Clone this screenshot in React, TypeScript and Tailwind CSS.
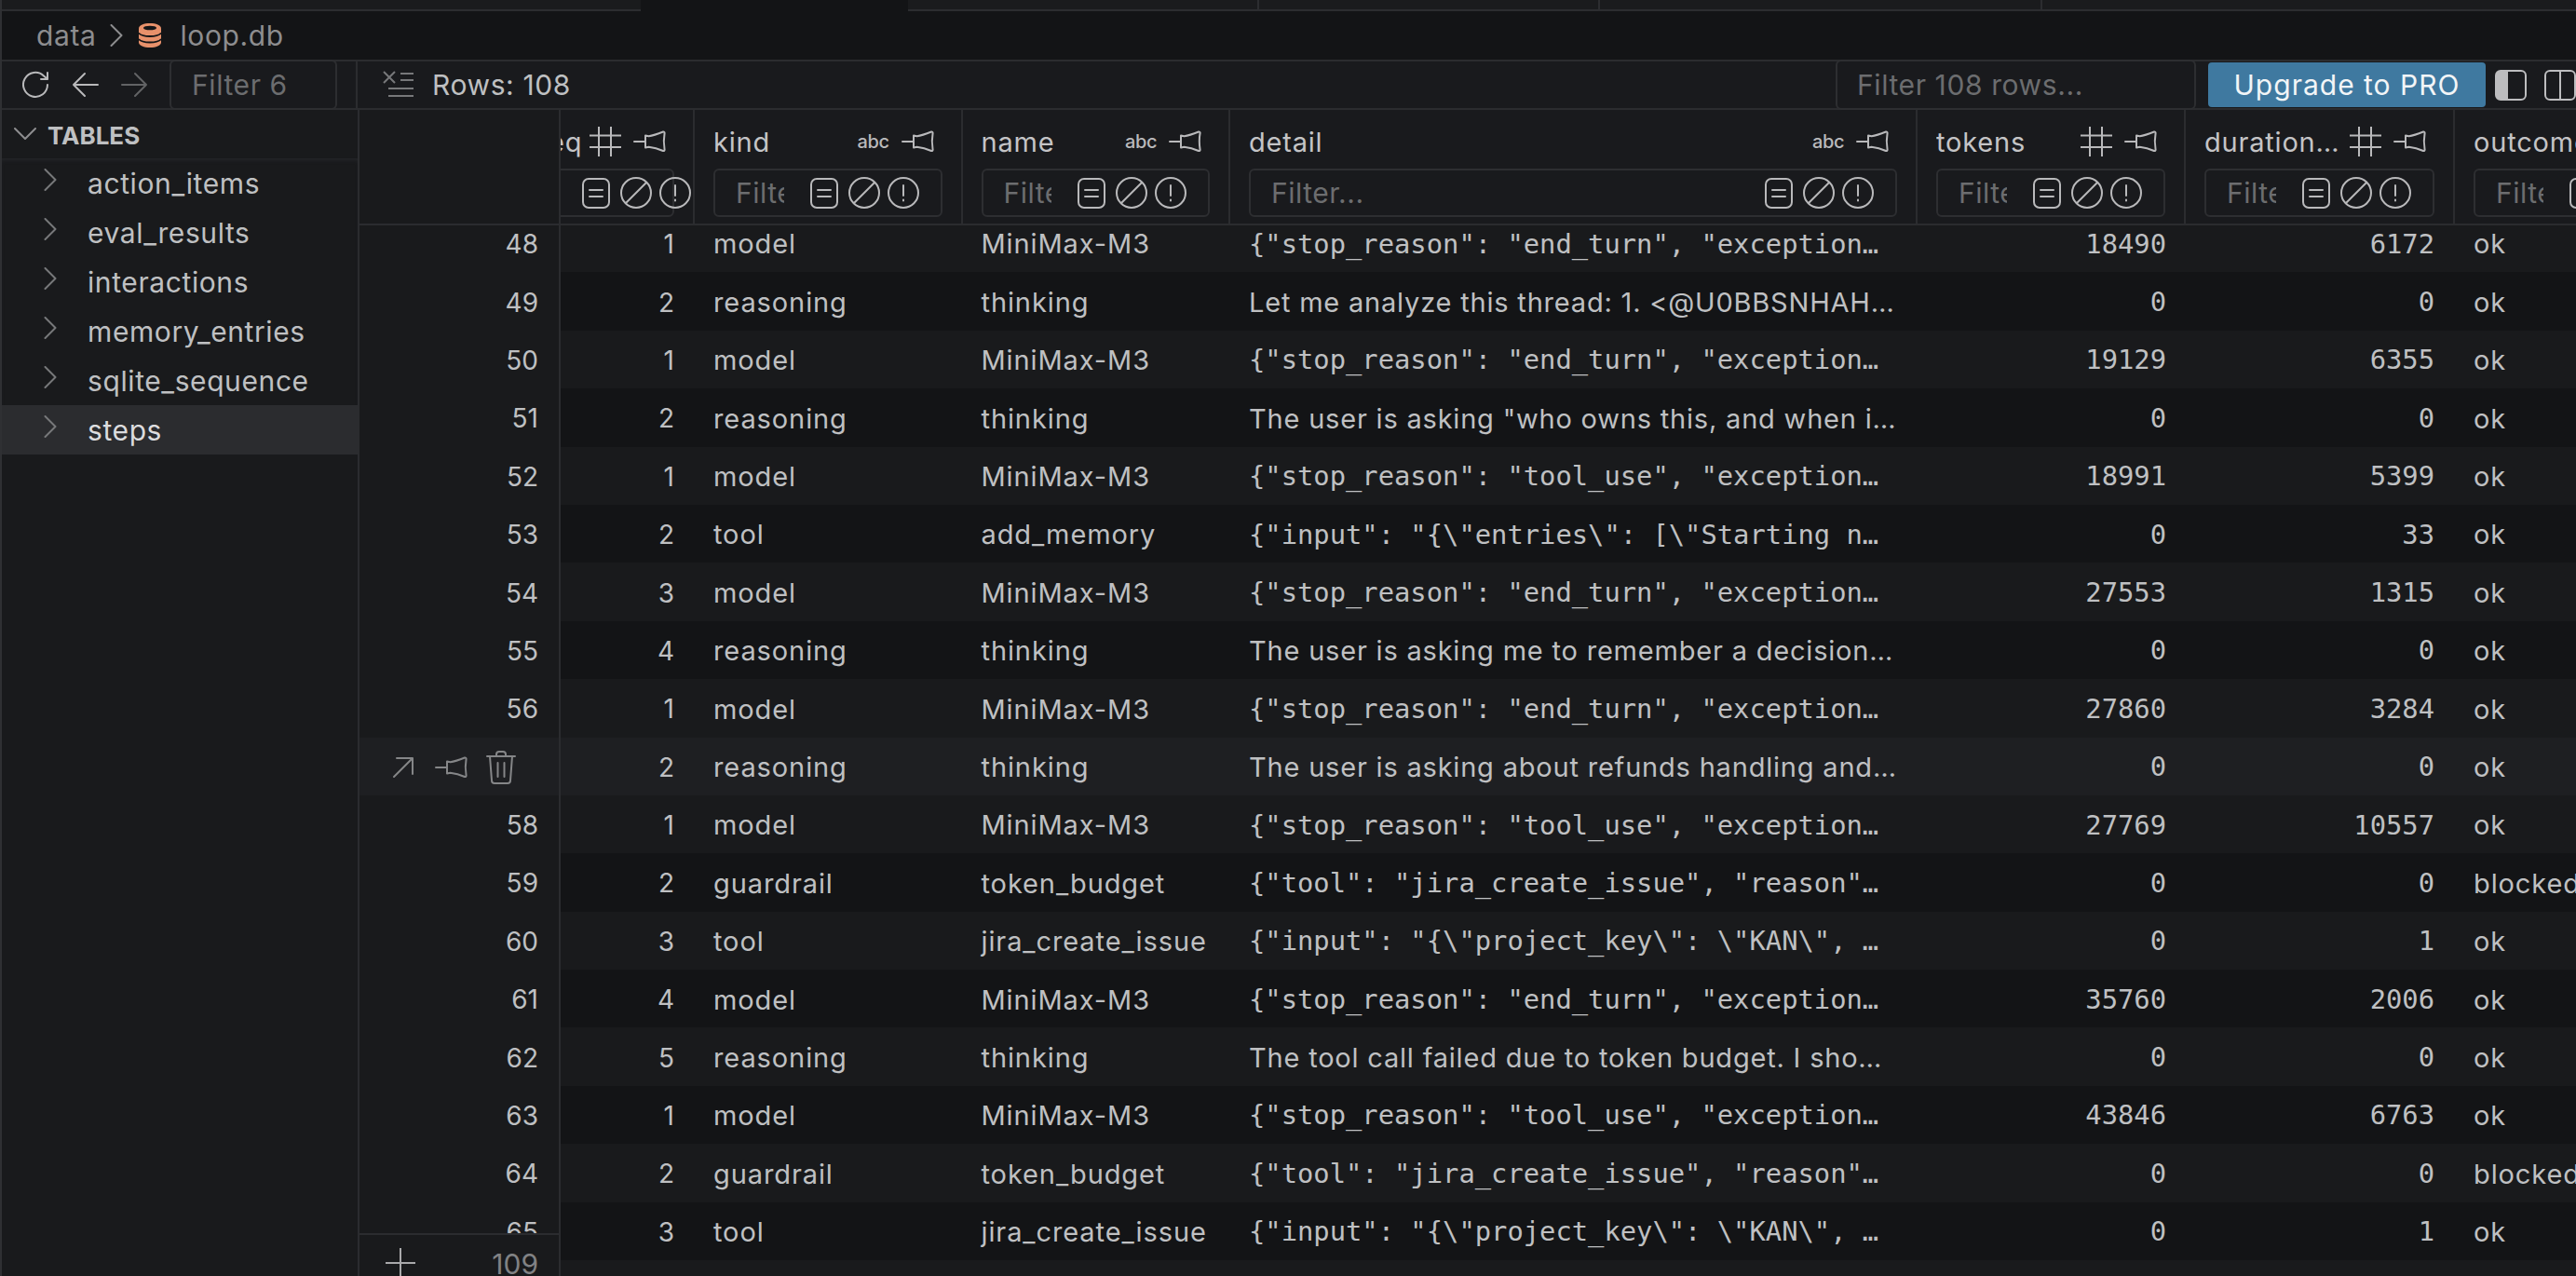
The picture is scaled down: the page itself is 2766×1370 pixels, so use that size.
import React from 'react';

const stroke = { fill: 'none', stroke: 'currentColor', strokeWidth: 2, strokeLinecap: 'round', strokeLinejoin: 'round' } as const;

const PinIcon = () => (
  <svg width="36" height="24" viewBox="0 0 36 24" {...stroke} className="shrink-0">
    <path d="M1 12h12" />
    <path d="M13 5.500v13l3.500-.8c5 .5 10.500 2 15.500 4.300a1.200 1.200 0 0 0 1.600-1.200c-1-6-1-12.600 0-18A1.200 1.200 0 0 0 32 1.500C27 3.500 21.500 5.500 16.500 6.300z" />
  </svg>
);

const HashIcon = () => (
  <svg width="34" height="34" viewBox="0 0 34 34" {...stroke} strokeLinecap="butt" className="shrink-0">
    <path d="M10 1v32M23 1v32M0 10.500h34M0 23h34" />
  </svg>
);

const AbcIcon = () => <span className="w-[32px] shrink-0 text-[20px] leading-none font-medium tracking-[-0.3px]">abc</span>;

const TextBoxIcon = () => (
  <svg width="30" height="33" viewBox="0 0 30 33" {...stroke} className="shrink-0">
    <rect x="1" y="1" width="28" height="31" rx="6" />
    <path d="M8 13h14M8 20h14" />
  </svg>
);

const BanIcon = () => (
  <svg width="34" height="34" viewBox="0 0 34 34" {...stroke} className="shrink-0">
    <circle cx="17" cy="17" r="16" />
    <path d="M6 28 28 6" />
  </svg>
);

const AlertIcon = () => (
  <svg width="34" height="34" viewBox="0 0 34 34" {...stroke} className="shrink-0">
    <circle cx="17" cy="17" r="16" />
    <path d="M17 9v11M17 24.500v1" />
  </svg>
);

const Chevron = ({ className }: { className: string }) => (
  <svg width="14" height="24" viewBox="0 0 14 24" {...stroke} className={className}>
    <path d="m1.500 1 11 11-11 11" />
  </svg>
);

const ArrowLeft = ({ className }: { className: string }) => (
  <svg width="30" height="30" viewBox="0 0 30 30" {...stroke} className={className}>
    <path d="M28 15H2M14 3 2 15l12 12" />
  </svg>
);

const DbIcon = () => (
  <svg width="24" height="26" viewBox="0 0 24 26" className="shrink-0">
    <path fill="#e8916b" d="M12 0C5.500 0 0 2 0 5.500v15C0 24 5.500 26 12 26s12-2 12-5.500v-15C24 2 18.500 0 12 0z" />
    <ellipse cx="12" cy="5" rx="7" ry="2.300" fill="#141517" />
    <path d="M0 10.500c2 2.500 7 3.500 12 3.500s10-1 12-3.500M0 17c2 2.500 7 3.500 12 3.500s10-1 12-3.500" fill="none" stroke="#141517" strokeWidth="1.800" />
  </svg>
);

const columns = [
  { name: 'seq', type: 'num', width: 'w-[193px]' },
  { name: 'kind', type: 'abc', width: 'w-[287.5px]' },
  { name: 'name', type: 'abc', width: 'w-[287.5px]' },
  { name: 'detail', type: 'abc', width: 'w-[738px]' },
  { name: 'tokens', type: 'num', width: 'w-[288px]' },
  { name: 'duration_ms', type: 'num', width: 'w-[289px]' },
  { name: 'outcome', type: 'abc', width: 'w-[287px]' },
];

const endTurn = '{"stop_reason": "end_turn", "exception…';
const toolUse = '{"stop_reason": "tool_use", "exception…';
const budget = '{"tool": "jira_create_issue", "reason"…';
const jira = '{"input": "{\\"project_key\\": \\"KAN\\", …';

const rows = [
  [48, 1, 'model', 'MiniMax-M3', endTurn, 18490, 6172, 'ok'],
  [49, 2, 'reasoning', 'thinking', 'Let me analyze this thread: 1. <@U0BBSNHAH…', 0, 0, 'ok'],
  [50, 1, 'model', 'MiniMax-M3', endTurn, 19129, 6355, 'ok'],
  [51, 2, 'reasoning', 'thinking', 'The user is asking "who owns this, and when i…', 0, 0, 'ok'],
  [52, 1, 'model', 'MiniMax-M3', toolUse, 18991, 5399, 'ok'],
  [53, 2, 'tool', 'add_memory', '{"input": "{\\"entries\\": [\\"Starting n…', 0, 33, 'ok'],
  [54, 3, 'model', 'MiniMax-M3', endTurn, 27553, 1315, 'ok'],
  [55, 4, 'reasoning', 'thinking', 'The user is asking me to remember a decision…', 0, 0, 'ok'],
  [56, 1, 'model', 'MiniMax-M3', endTurn, 27860, 3284, 'ok'],
  [57, 2, 'reasoning', 'thinking', 'The user is asking about refunds handling and…', 0, 0, 'ok'],
  [58, 1, 'model', 'MiniMax-M3', toolUse, 27769, 10557, 'ok'],
  [59, 2, 'guardrail', 'token_budget', budget, 0, 0, 'blocked'],
  [60, 3, 'tool', 'jira_create_issue', jira, 0, 1, 'ok'],
  [61, 4, 'model', 'MiniMax-M3', endTurn, 35760, 2006, 'ok'],
  [62, 5, 'reasoning', 'thinking', 'The tool call failed due to token budget. I sho…', 0, 0, 'ok'],
  [63, 1, 'model', 'MiniMax-M3', toolUse, 43846, 6763, 'ok'],
  [64, 2, 'guardrail', 'token_budget', budget, 0, 0, 'blocked'],
  [65, 3, 'tool', 'jira_create_issue', jira, 0, 1, 'ok'],
] as (string | number)[][];

const tables = ['action_items', 'eval_results', 'interactions', 'memory_entries', 'sqlite_sequence', 'steps'];

const mono = "font-['DejaVu_Sans_Mono',monospace] text-[28.8px] tracking-normal";
const label = 'text-[30px] tracking-[0.6px]';

const ColumnHeader = ({ name, type, width }: { name: string; type: string; width: string }) => (
  <div className={`${width} shrink-0 border-r-2 border-[#2b2c2f] pl-[20px] pr-[20px] pt-[10px]`}>
    <div className="flex h-[48px] items-center pr-[8px] text-[#b9b9bb]">
      <span className="min-w-0 flex-1 truncate pt-[1px] text-[29px] tracking-[0.8px] text-[#c4c4c6]">{name}</span>
      {type === 'num' ? <HashIcon /> : <AbcIcon />}
      <span className={type === 'num' ? 'ml-[13px]' : 'ml-[15px]'}>
        <PinIcon />
      </span>
    </div>
    <div className="mt-[5px] flex h-[52px] items-center rounded-[6px] border-2 border-[#2d2e31] pl-[22px] pr-[23px] text-[#b9b9bb]">
      <input placeholder="Filter..." className="mr-[28px] w-full min-w-0 flex-1 bg-transparent text-[30px] tracking-[0.5px] outline-none placeholder:text-[#6c6d6f]" />
      <TextBoxIcon />
      <span className="ml-[11px]">
        <BanIcon />
      </span>
      <span className="ml-[8px]">
        <AlertIcon />
      </span>
    </div>
  </div>
);

const Row = ({ row, index }: { row: (string | number)[]; index: number }) => {
  const bg = row[0] === 57 ? 'bg-[#1e1f22]' : index % 2 === 0 ? 'bg-[#191a1c]' : 'bg-[#131416]';
  const detailIsJson = String(row[4]).startsWith('{');
  return (
    <div className={`flex h-[62.4px] items-center pt-[2px] text-[29px] tracking-[0.9px] text-[#bfc0c2] ${bg}`}>
      <div className="w-[193px] shrink-0 pr-[22px] text-right text-[28px] tracking-normal">{row[1]}</div>
      <div className="w-[287.5px] shrink-0 truncate pl-[20px] pr-[20px]">{row[2]}</div>
      <div className="w-[287.5px] shrink-0 truncate pl-[20px] pr-[20px]">{row[3]}</div>
      <div className={`w-[738px] shrink-0 truncate pl-[20px] pr-[20px] ${detailIsJson ? mono : 'tracking-[0.8px]'}`}>{row[4]}</div>
      <div className={`w-[288px] shrink-0 pr-[21px] text-right ${mono}`}>{row[5]}</div>
      <div className={`w-[289px] shrink-0 pr-[22px] text-right ${mono}`}>{row[6]}</div>
      <div className="w-[287px] shrink-0 pl-[20px]">{row[7]}</div>
    </div>
  );
};

const App: React.FC = () => {
  return (
    <div className="flex h-[1370px] w-[2766px] flex-col overflow-hidden border-l-2 border-[#2f3033] bg-[#131416] font-[Inter,sans-serif] text-[26px] text-[#bfc0c2]">
      {/* editor tabs, only the bottom sliver is on screen */}
      <div className="flex h-[12px] shrink-0">
        <div className="w-[686px] border-b-2 border-[#2c2d30] bg-[#1a1b1d]" />
        <div className="w-[287px]" />
        <div className="w-[377px] border-b-2 border-r-2 border-[#2c2d30] bg-[#1a1b1d]" />
        <div className="w-[366px] border-b-2 border-r-2 border-[#2c2d30] bg-[#1a1b1d]" />
        <div className="w-[475px] border-b-2 border-r-2 border-[#2c2d30] bg-[#1a1b1d]" />
        <div className="flex-1 border-b-2 border-[#2c2d30] bg-[#1a1b1d]" />
      </div>

      {/* breadcrumb */}
      <div className={`flex h-[52px] shrink-0 items-center pl-[37px] text-[#8d8d8f] ${label}`}>
        <span>data</span>
        <Chevron className="ml-[15px] mr-[17px] shrink-0" />
        <DbIcon />
        <span className="ml-[20px]">loop.db</span>
      </div>

      {/* toolbar */}
      <div className={`flex h-[54px] shrink-0 border-y-2 border-[#2b2c2f] bg-[#191a1d] ${label}`}>
        <div className="flex w-[382px] shrink-0 items-center border-r-2 border-[#2b2c2f] pl-[22px]">
          <svg width="30" height="30" viewBox="0 0 30 30" {...stroke} className="shrink-0 text-[#b9b9bb]">
            <path d="M27 15a13 13 0 1 1-4-9.500l4 3.500M27 2v7h-7" />
          </svg>
          <ArrowLeft className="ml-[23px] shrink-0 text-[#b9b9bb]" />
          <ArrowLeft className="ml-[22px] shrink-0 rotate-180 text-[#626365]" />
          <div className="-my-[2px] ml-[23px] flex h-[54px] w-[180px] items-center rounded-[6px] border-2 border-[#2d2e31] pl-[22px] text-[#6c6d6f]">
            Filter 6
          </div>
        </div>
        <div className="flex min-w-0 flex-1 items-center pl-[27px]">
          <svg width="34" height="30" viewBox="0 0 34 30" {...stroke} strokeLinecap="butt" className="shrink-0 text-[#77787a]">
            <path d="M1 1l12 12M13 1 1 13M19 3h14M19 10h14M6 19h27M6 27h27" />
          </svg>
          <span className="ml-[19px]">Rows: 108</span>
          <div className="-my-[2px] ml-auto flex h-[54px] w-[387px] items-center rounded-[6px] border-2 border-[#2d2e31] pl-[21px] text-[#6c6d6f]">
            Filter 108 rows...
          </div>
          <div className="ml-[13px] flex h-[48px] w-[298px] shrink-0 items-center justify-center rounded-[4px] bg-[#3f79a0] tracking-[1px] text-[#f2f5f7]">
            Upgrade to PRO
          </div>
          <svg width="34" height="33" viewBox="0 0 34 33" className="ml-[10px] shrink-0 text-[#bdbdbf]">
            <path d="M6 1h8v31H6a5 5 0 0 1-5-5V6a5 5 0 0 1 5-5z" fill="currentColor" />
            <rect x="1" y="1" width="32" height="31" rx="5" fill="none" stroke="currentColor" strokeWidth="2" />
          </svg>
          <svg width="34" height="33" viewBox="0 0 34 33" className="ml-[19px] shrink-0 text-[#bdbdbf]">
            <rect x="1" y="1" width="32" height="31" rx="5" fill="none" stroke="currentColor" strokeWidth="2" />
            <path d="M17 1v31" stroke="currentColor" strokeWidth="2" />
          </svg>
        </div>
      </div>

      <div className="flex min-h-0 flex-1">
        {/* tables sidebar */}
        <div className="w-[382px] shrink-0 bg-[#191a1c]">
          <div className="flex h-[52px] items-center pl-[13px]">
            <svg width="24" height="14" viewBox="0 0 24 14" {...stroke} className="shrink-0 text-[#8d8d8f]">
              <path d="m1 1 11 11L23 1" />
            </svg>
            <span className="ml-[12px] pt-[2px] text-[26px] font-bold text-[#bfc0c2]">TABLES</span>
          </div>
          <div className="shadow-[inset_0_4px_4px_-2px_#25262a]">
            {tables.map((t) => (
              <div key={t} className={`flex h-[53px] items-center pl-[45px] ${label} ${t === 'steps' ? 'bg-[#2b2c2f] text-[#dcdcde]' : ''}`}>
                <Chevron className="-mt-[7px] shrink-0 text-[#77787a]" />
                <span className="ml-[33px] pt-[2px]">{t}</span>
              </div>
            ))}
          </div>
        </div>

        {/* row index column */}
        <div className="flex w-[218px] shrink-0 flex-col border-x-2 border-[#2b2c2f] bg-[#191a1c]">
          <div className="h-[124px] shrink-0 border-b-2 border-[#2b2c2f]" />
          <div className="min-h-0 flex-1 overflow-hidden">
            <div className="-mt-[12px]">
              {rows.map((row) => (
                <div key={row[0]} className={`flex h-[62.4px] items-center justify-end pr-[22px] pt-[2px] text-[28px] ${row[0] === 57 ? 'bg-[#1e1f22]' : ''}`}>
                  {row[0] === 57 ? (
                    <div className="mr-auto flex items-center pl-[35px] text-[#858688]">
                      <svg width="24" height="24" viewBox="0 0 24 24" {...stroke} className="shrink-0">
                        <path d="M2 22 22 2M5 2h17v17" />
                      </svg>
                      <span className="ml-[22px]">
                        <PinIcon />
                      </span>
                      <svg width="32" height="36" viewBox="0 0 32 36" {...stroke} className="ml-[19px] shrink-0">
                        <path d="M1 6h30M11 6V4a3 3 0 0 1 3-3h4a3 3 0 0 1 3 3v2M4 6l2 26a3 3 0 0 0 3 3h14a3 3 0 0 0 3-3l2-26M12.500 13v15M19.500 13v15" />
                      </svg>
                    </div>
                  ) : (
                    row[0]
                  )}
                </div>
              ))}
            </div>
          </div>
          <div className="flex h-[46px] shrink-0 items-start justify-between overflow-hidden border-t-2 border-[#2b2c2f] bg-[#191a1c] pl-[28px] pr-[22px] pt-[14px] text-[#818284]">
            <svg width="32" height="32" viewBox="0 0 32 32" {...stroke} strokeLinecap="butt" className="shrink-0 text-[#a9a9ab]">
              <path d="M16 0v32M0 16h32" />
            </svg>
            <span className="text-[30px] leading-[34px]">109</span>
          </div>
        </div>

        {/* data grid, scrolled sideways so seq is cut off by the index column */}
        <div className="flex min-w-0 flex-1 flex-col overflow-hidden">
          <div className="relative z-10 flex h-[124px] shrink-0 border-b-2 border-[#2b2c2f] bg-[#191a1d] -ml-[49px]">
            {columns.map((c) => (
              <ColumnHeader key={c.name} name={c.name} type={c.type} width={c.width} />
            ))}
          </div>
          <div className="-ml-[49px] -mt-[12px] w-[2300px]">
            {rows.map((row, i) => (
              <Row key={row[0]} row={row} index={i} />
            ))}
            <div className="h-[62.4px] bg-[#191a1c]" />
          </div>
        </div>
      </div>
    </div>
  );
};

export default App;
